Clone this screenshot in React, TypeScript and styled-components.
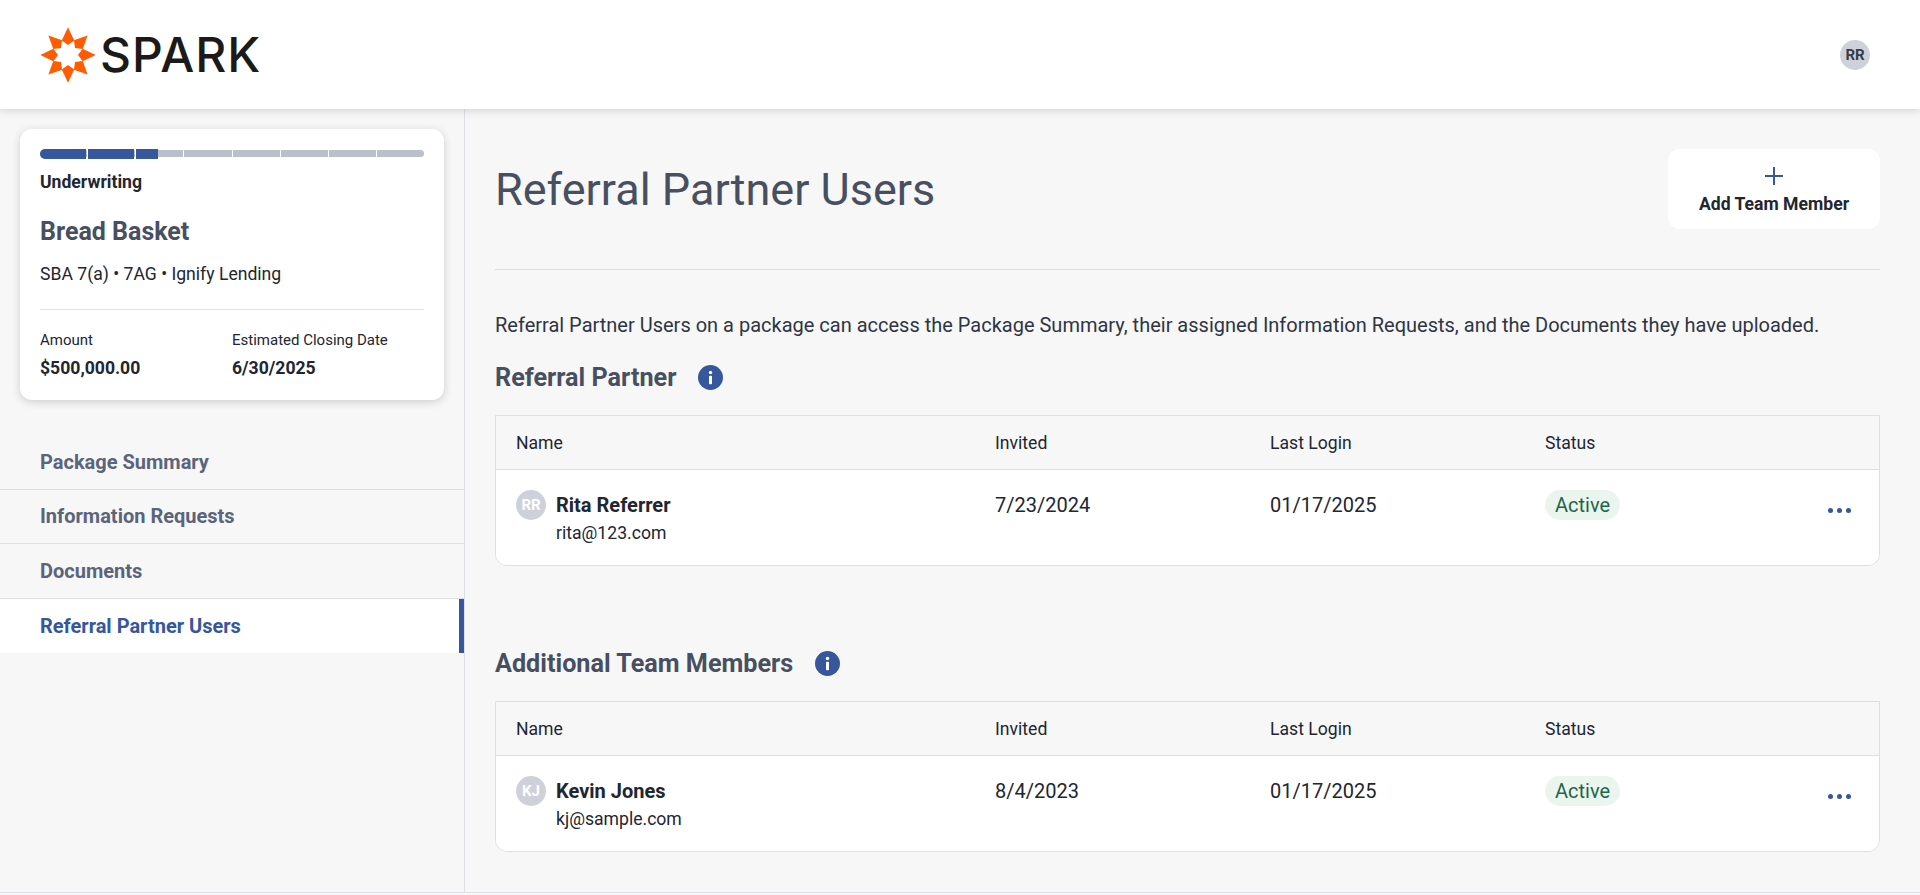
import React from 'react';
import styled, { createGlobalStyle } from 'styled-components';

const Global = createGlobalStyle`
  html, body { margin: 0; padding: 0; height: 100%; background: #f7f7f7; }
  body { font-family: Roboto, "Liberation Sans", sans-serif; color: #212631; }
  #root { height: 100%; }
  * { box-sizing: border-box; }
`;

const Page = styled.div`
  display: flex;
  flex-direction: column;
  height: 893px;
  overflow: hidden;
`;

const Header = styled.header`
  position: relative;
  z-index: 2;
  flex: 0 0 109px;
  display: flex;
  align-items: center;
  justify-content: space-between;
  padding: 0 50px 0 40px;
  background: #fff;
  box-shadow: 0 2px 8px rgba(33, 38, 49, 0.16);
`;

const Logo = styled.div`
  display: flex;
  align-items: center;
  gap: 4px;
`;

const LogoWord = styled.span`
  font-family: Inter, sans-serif;
  font-size: 48px;
  font-weight: 500;
  line-height: 1;
  letter-spacing: 1px;
  color: #1b1a19;
`;

const HeaderAvatar = styled.div`
  display: flex;
  align-items: center;
  justify-content: center;
  width: 30px;
  height: 30px;
  border-radius: 50%;
  background: #ced1d9;
  color: #353c4c;
  font-size: 15px;
  font-weight: 700;
`;

const Body = styled.div`
  flex: 1;
  display: flex;
  min-height: 0;
  border-bottom: 1px solid #dedfe3;
`;

const Sidebar = styled.aside`
  flex: 0 0 465px;
  padding-top: 20px;
  border-right: 1px solid #dedfe3;
`;

const Card = styled.section`
  display: flex;
  flex-direction: column;
  width: 424px;
  height: 271px;
  margin: 0 0 35px 20px;
  padding: 20px;
  background: #fff;
  border-radius: 12px;
  box-shadow: 0 2px 8px rgba(33, 38, 49, 0.2);
`;

const Progress = styled.div`
  position: relative;
  display: flex;
  height: 8px;
  margin-top: 1px;
`;

const Segment = styled.span`
  flex: 1;
  background: #bbbfc9;
  border-right: 1px solid #fff;
  &:first-of-type { border-radius: 4px 0 0 4px; }
  &:last-of-type { border-radius: 0 4px 4px 0; border-right: none; }
`;

const ProgressFill = styled.div`
  position: absolute;
  left: 0;
  top: -1px;
  display: flex;
  gap: 2px;
  height: 10px;
`;

const FillSegment = styled.span<{ $w: number }>`
  width: ${p => p.$w}px;
  background: #36579b;
  &:first-child { border-radius: 5px 0 0 5px; }
`;

const Stage = styled.div`
  margin-top: 13px;
  font-size: 17.6px;
  line-height: 24px;
  font-weight: 700;
`;

const BorrowerName = styled.h2`
  margin: 22px 0 0;
  font-size: 25px;
  line-height: 32px;
  font-weight: 700;
  color: #484f60;
`;

const Product = styled.div`
  margin-top: 14px;
  font-size: 17.6px;
  line-height: 24px;
`;

const CardDivider = styled.hr`
  width: 100%;
  margin: 23px 0 0;
  border: 0;
  border-top: 1px solid #dedfe3;
`;

const Facts = styled.div`
  display: grid;
  grid-template-columns: 192px 1fr;
  margin-top: 20px;
`;

const FactLabel = styled.div`
  font-size: 15px;
  line-height: 20px;
`;

const FactValue = styled.div`
  margin-top: 6px;
  font-size: 17.6px;
  line-height: 24px;
  font-weight: 700;
`;

const Nav = styled.nav`
  display: flex;
  flex-direction: column;
`;

const NavItem = styled.a<{ $active?: boolean }>`
  display: flex;
  align-items: center;
  height: 54.5px;
  padding-left: 40px;
  font-size: 20px;
  font-weight: 700;
  color: ${p => (p.$active ? '#36579b' : '#5b647a')};
  background: ${p => (p.$active ? '#fff' : 'transparent')};
  border-bottom: ${p => (p.$active ? 'none' : '1px solid #dedfe3')};
  border-right: ${p => (p.$active ? '5px solid #36579b' : 'none')};
`;

const Main = styled.main`
  flex: 1;
  padding: 40px 40px 0 30px;
`;

const TitleRow = styled.div`
  display: flex;
  align-items: center;
  justify-content: space-between;
  padding-bottom: 40px;
  border-bottom: 1px solid #dedfe3;
`;

const PageTitle = styled.h1`
  margin: 2px 0 0;
  font-size: 45px;
  line-height: 56px;
  font-weight: 400;
  color: #484f60;
`;

const AddButton = styled.button`
  display: flex;
  flex-direction: column;
  align-items: center;
  justify-content: center;
  gap: 7px;
  width: 212px;
  height: 80px;
  padding: 4px 0 0;
  border: 0;
  border-radius: 12px;
  background: #fff;
  color: #212631;
  font-family: inherit;
  font-size: 17.6px;
  font-weight: 700;
  line-height: 24px;
`;

const Intro = styled.p`
  margin: 41px 0 0;
  font-size: 20px;
  line-height: 28px;
  color: #2f3542;
`;

const SectionHead = styled.div<{ $top: number }>`
  display: flex;
  align-items: center;
  gap: 22px;
  margin-top: ${p => p.$top}px;
  height: 40px;
`;

const SectionTitle = styled.h3`
  margin: 0;
  font-size: 25.2px;
  font-weight: 700;
  color: #484f60;
`;

const Table = styled.div`
  margin-top: 18px;
  border: 1px solid #dedfe3;
  border-radius: 0 0 12px 12px;
  overflow: hidden;
`;

const Columns = `
  display: grid;
  grid-template-columns: 479px 275px 275px 1fr 64px;
  padding-left: 20px;
`;

const HeadRow = styled.div`
  ${Columns}
  align-items: center;
  height: 54px;
  border-bottom: 1px solid #dedfe3;
  font-size: 17.6px;
  color: #212631;
`;

const DataRow = styled.div`
  ${Columns}
  height: 95px;
  padding-top: 20px;
  background: #fff;
  font-size: 20px;
`;

const Person = styled.div`
  display: flex;
  gap: 10px;
`;

const RowAvatar = styled.div`
  display: flex;
  align-items: center;
  justify-content: center;
  width: 30px;
  height: 30px;
  border-radius: 50%;
  background: #ced1d9;
  color: #fff;
  font-size: 15px;
  font-weight: 700;
`;

const PersonName = styled.div`
  font-size: 20px;
  line-height: 30px;
  font-weight: 700;
`;

const PersonEmail = styled.div`
  font-size: 17.6px;
  line-height: 26px;
`;

const DateCell = styled.div`
  font-size: 20px;
  line-height: 30px;
`;

const Pill = styled.span`
  display: inline-block;
  height: 30px;
  padding: 0 10px;
  border-radius: 15px;
  background: #ebf5f0;
  color: #1f6647;
  font-size: 20px;
  line-height: 30px;
`;

const Kebab = styled.button`
  display: flex;
  align-self: start;
  gap: 4px;
  margin: 18px 0 0 13px;
  padding: 0;
  border: 0;
  background: none;
`;

const Dot = styled.span`
  width: 5px;
  height: 5px;
  border-radius: 50%;
  background: #36579b;
`;

const SparkMark = () => (
  <svg width="56" height="56" viewBox="-28 -28 56 56" fill="#ff5c00">
    {[0, 45, 90, 135, 180, 225, 270, 315].map(a => (
      <path key={a} d="M0 -27.7 L6.2 -14.6 L0 -10 L-6.2 -14.6 Z" transform={`rotate(${a})`} />
    ))}
  </svg>
);

const InfoIcon = () => (
  <svg width="25" height="25" viewBox="0 0 25 25">
    <circle cx="12.5" cy="12.5" r="12.5" fill="#36579b" />
    <circle cx="12.5" cy="7.5" r="1.7" fill="#fff" />
    <rect x="11" y="10.8" width="3" height="8.4" rx="0.8" fill="#fff" />
  </svg>
);

const PlusIcon = () => (
  <svg width="18" height="18" viewBox="0 0 18 18" stroke="#36579b" strokeWidth="2">
    <path d="M9 0v18M0 9h18" />
  </svg>
);

interface Member {
  initials: string;
  name: string;
  email: string;
  invited: string;
  lastLogin: string;
}

const MemberTable = ({ member }: { member: Member }) => (
  <Table>
    <HeadRow>
      <div>Name</div>
      <div>Invited</div>
      <div>Last Login</div>
      <div>Status</div>
    </HeadRow>
    <DataRow>
      <Person>
        <RowAvatar>{member.initials}</RowAvatar>
        <div>
          <PersonName>{member.name}</PersonName>
          <PersonEmail>{member.email}</PersonEmail>
        </div>
      </Person>
      <DateCell>{member.invited}</DateCell>
      <DateCell>{member.lastLogin}</DateCell>
      <div><Pill>Active</Pill></div>
      <Kebab aria-label="More"><Dot /><Dot /><Dot /></Kebab>
    </DataRow>
  </Table>
);

const navItems = ['Package Summary', 'Information Requests', 'Documents', 'Referral Partner Users'];

export default function App() {
  return (
    <Page>
      <Global />
      <Header>
        <Logo>
          <SparkMark />
          <LogoWord>SPARK</LogoWord>
        </Logo>
        <HeaderAvatar>RR</HeaderAvatar>
      </Header>
      <Body>
        <Sidebar>
          <Card>
            <Progress>
              {Array.from({ length: 8 }).map((_, i) => <Segment key={i} />)}
              <ProgressFill>
                <FillSegment $w={46} />
                <FillSegment $w={46} />
                <FillSegment $w={22} />
              </ProgressFill>
            </Progress>
            <Stage>Underwriting</Stage>
            <BorrowerName>Bread Basket</BorrowerName>
            <Product>SBA 7(a) • 7AG • Ignify Lending</Product>
            <CardDivider />
            <Facts>
              <div>
                <FactLabel>Amount</FactLabel>
                <FactValue>$500,000.00</FactValue>
              </div>
              <div>
                <FactLabel>Estimated Closing Date</FactLabel>
                <FactValue>6/30/2025</FactValue>
              </div>
            </Facts>
          </Card>
          <Nav>
            {navItems.map((n, i) => (
              <NavItem key={n} $active={i === navItems.length - 1}>{n}</NavItem>
            ))}
          </Nav>
        </Sidebar>
        <Main>
          <TitleRow>
            <PageTitle>Referral Partner Users</PageTitle>
            <AddButton>
              <PlusIcon />
              Add Team Member
            </AddButton>
          </TitleRow>
          <Intro>Referral Partner Users on a package can access the Package Summary, their assigned Information Requests, and the Documents they have uploaded.</Intro>
          <SectionHead $top={18}>
            <SectionTitle>Referral Partner</SectionTitle>
            <InfoIcon />
          </SectionHead>
          <MemberTable member={{ initials: 'RR', name: 'Rita Referrer', email: 'rita@123.com', invited: '7/23/2024', lastLogin: '01/17/2025' }} />
          <SectionHead $top={77}>
            <SectionTitle>Additional Team Members</SectionTitle>
            <InfoIcon />
          </SectionHead>
          <MemberTable member={{ initials: 'KJ', name: 'Kevin Jones', email: 'kj@sample.com', invited: '8/4/2023', lastLogin: '01/17/2025' }} />
        </Main>
      </Body>
    </Page>
  );
}
